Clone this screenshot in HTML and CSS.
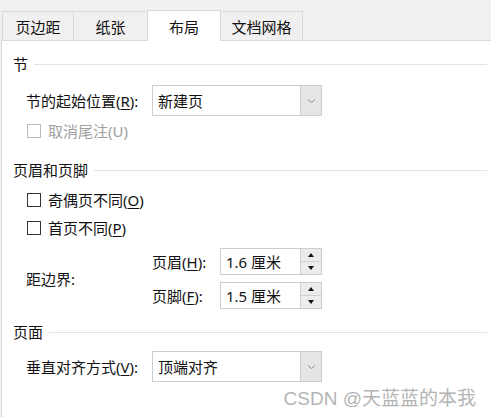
FILE: index.html
```html
<!DOCTYPE html>
<html lang="zh">
<head>
<meta charset="utf-8">
<link rel="stylesheet" href="styles.css">
</head>
<body>
<div class="dialog">
  <div class="tabs">
    <div class="tab t1">页边距</div>
    <div class="tab t2">纸张</div>
    <div class="tab t3 active">布局</div>
    <div class="tab t4">文档网格</div>
  </div>
  <div class="panel">
    <div class="sec-head s1"><span>节</span><i class="rule"></i></div>
    <div class="row r-sel1">
      <span class="lbl">节的起始位置(<u>R</u>):</span>
      <div class="select"><span class="val">新建页</span><span class="drop"><svg width="9" height="6" viewBox="0 0 9 6"><path d="M1 1.5 L4.5 4.5 L8 1.5" fill="none" stroke="#8a8a8a" stroke-width="1"/></svg></span></div>
    </div>
    <div class="row check disabled r-cb0"><span class="box"></span><span>取消尾注(U)</span></div>

    <div class="sec-head s2"><span>页眉和页脚</span><i class="rule"></i></div>
    <div class="row check r-cb1"><span class="box"></span><span>奇偶页不同(<u>O</u>)</span></div>
    <div class="row check r-cb2"><span class="box"></span><span>首页不同(<u>P</u>)</span></div>
    <div class="row r-margin">
      <span class="lbl">距边界:</span>
      <div class="spins">
        <div class="spin-row">
          <span class="slbl">页眉(<u>H</u>):</span>
          <div class="spin"><span class="val">1.6 厘米</span><span class="btns"><span class="b up"></span><span class="b down"></span></span></div>
        </div>
        <div class="spin-row">
          <span class="slbl">页脚(<u>F</u>):</span>
          <div class="spin"><span class="val">1.5 厘米</span><span class="btns"><span class="b up"></span><span class="b down"></span></span></div>
        </div>
      </div>
    </div>

    <div class="sec-head s3"><span>页面</span><i class="rule"></i></div>
    <div class="row r-sel2">
      <span class="lbl">垂直对齐方式(<u>V</u>):</span>
      <div class="select"><span class="val">顶端对齐</span><span class="drop"><svg width="9" height="6" viewBox="0 0 9 6"><path d="M1 1.5 L4.5 4.5 L8 1.5" fill="none" stroke="#8a8a8a" stroke-width="1"/></svg></span></div>
    </div>
    <div class="watermark">CSDN @天蓝蓝的本我</div>
  </div>
</div>
</body>
</html>
```

FILE: styles.css
```css
html, body {
  margin: 0;
  padding: 0;
}
body {
  width: 491px;
  height: 417px;
  overflow: hidden;
  background: #f0f0f0;
  font-family: "Noto Sans", "Noto Sans CJK SC", sans-serif;
  font-size: 15px;
  color: #111;
}
u { text-decoration: underline; text-underline-offset: 2px; }
.dialog {
  height: 417px;
  display: flex;
  flex-direction: column;
}
.tabs {
  display: flex;
  align-items: flex-end;
  height: 40px;
  padding-left: 2px;
  box-sizing: border-box;
}
.tab {
  height: 29px;
  box-sizing: border-box;
  border: 1px solid #d9d9d9;
  border-bottom: none;
  border-right: none;
  display: flex;
  align-items: center;
  justify-content: center;
  line-height: 20px;
  background: #f0f0f0;
  padding-top: 1px;
}
.t1 { width: 71px; }
.t2 { width: 74px; }
.t3 { width: 74px; }
.t4 { width: 82px; border-right: 1px solid #d9d9d9; }
.tab.active {
  height: 31px;
  margin-bottom: -1px;
  background: #fff;
  border-right: 1px solid #d9d9d9;
  position: relative;
  z-index: 1;
}
.tab.active + .tab { border-left: none; }
.panel {
  flex: 1;
  position: relative;
  background: #fff;
  margin-left: 1px;
  border-top: 1px solid #d9d9d9;
  border-left: 1px solid #d9d9d9;
  padding-left: 11px;
  padding-right: 4px;
}
.sec-head {
  display: flex;
  align-items: center;
  gap: 6px;
  height: 20px;
  line-height: 20px;
}
.sec-head .rule {
  flex: 1;
  height: 1px;
  background: #e3e3e3;
}
.s1 { margin-top: 13px; }
.s2 { margin-top: 19px; }
.s3 { margin-top: 13px; }
.row {
  display: flex;
  align-items: center;
  padding-left: 13px;
  line-height: 20px;
}
.lbl { width: 126px; flex: none; }
.select {
  width: 170px;
  height: 31px;
  box-sizing: border-box;
  border: 1px solid #cdcdcd;
  display: flex;
  align-items: center;
  background: #fff;
}
.select .val { flex: 1; padding-left: 5px; }
.select .drop {
  width: 21px;
  height: 29px;
  box-sizing: border-box;
  background: #e5e5e5;
  border-left: 1px solid #d0d0d0;
  display: flex;
  align-items: center;
  justify-content: center;
}
.r-sel1 { margin-top: 11px; }
.r-sel2 { margin-top: 9px; }
.check { gap: 7px; height: 20px; padding-left: 14px; }
.check .box {
  width: 14px;
  height: 14px;
  box-sizing: border-box;
  border: 1px solid #333;
  background: #fff;
}
.disabled { color: #a0a0a0; }
.disabled .box { border-color: #bcbcbc; }
.r-cb0 { margin-top: 5px; }
.r-cb1 { margin-top: 10px; }
.r-cb2 { margin-top: 8px; }
.r-margin { margin-top: 10px; }
.spins {
  display: flex;
  flex-direction: column;
  gap: 7px;
}
.spin-row { display: flex; align-items: center; }
.slbl { width: 68px; flex: none; }
.spin {
  width: 102px;
  height: 27px;
  box-sizing: border-box;
  border: 1px solid #cdcdcd;
  display: flex;
  align-items: center;
}
.spin .val { flex: 1; padding-left: 5px; }
.btns {
  width: 21px;
  height: 25px;
  display: flex;
  flex-direction: column;
  box-sizing: border-box;
  border-left: 1px solid #d0d0d0;
}
.b {
  flex: 1;
  background: #ececec;
  display: flex;
  align-items: center;
  justify-content: center;
}
.b.up { border-bottom: 1px solid #d0d0d0; }
.b.up::after {
  content: "";
  border-left: 3px solid transparent;
  border-right: 3px solid transparent;
  border-bottom: 4px solid #111;
}
.b.down::after {
  content: "";
  border-left: 3px solid transparent;
  border-right: 3px solid transparent;
  border-top: 4px solid #111;
}
.watermark {
  position: absolute;
  right: 15px;
  top: 347px;
  font-family: "Liberation Sans", "Noto Sans CJK SC", sans-serif;
  font-size: 19px;
  color: #b4b4b4;
  line-height: 22px;
  white-space: nowrap;
}
```
